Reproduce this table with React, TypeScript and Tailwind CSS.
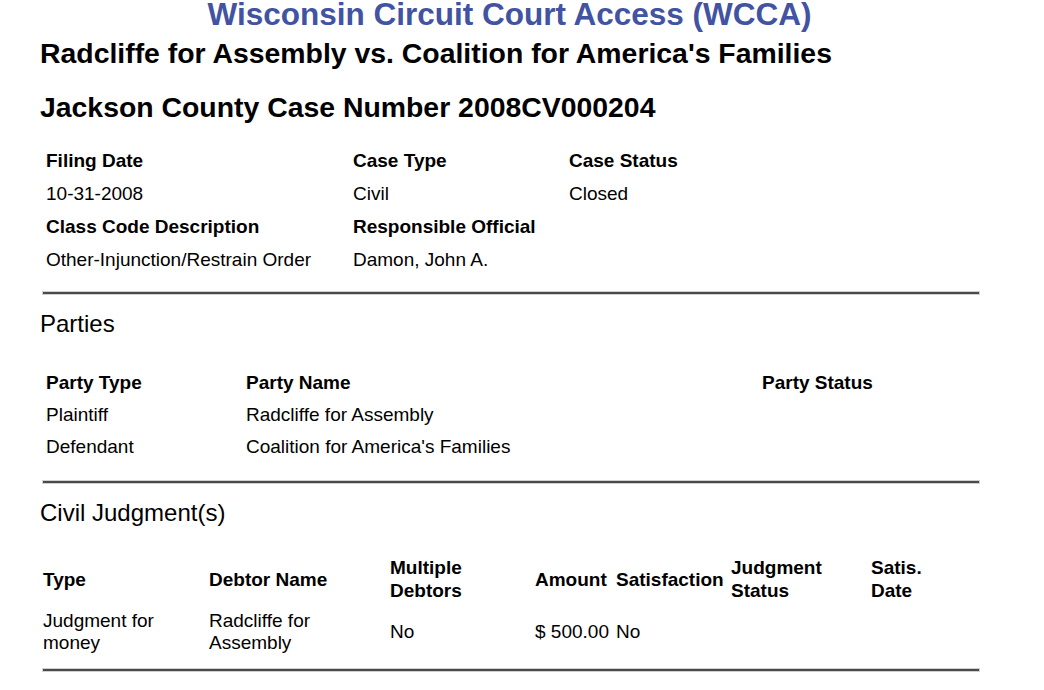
const labels = "font-bold";

function Rule() {
	return <div className="h-[2px] w-[936px] ml-[3px] bg-[#4a4a4a] shadow-[0_0_0_1px_#d0d0d0]" />;
}

const judgmentCols = "grid grid-cols-[166px_181px_145px_81px_115px_140px_1fr] items-center";

export default function App() {
	return (
		<div
			className="h-[690px] overflow-hidden bg-white text-black"
			style={{ fontFamily: '"Liberation Sans", Arial, sans-serif' }}
		>
			<div className="ml-[40px] w-[939px]">
				<h1 className="text-center text-[31.5px] leading-[29px] font-bold text-[#4153a1] whitespace-nowrap">
					Wisconsin Circuit Court Access (WCCA)
				</h1>
				<h2 className="mt-[8px] text-[28.4px] leading-[32px] font-bold whitespace-nowrap">
					Radcliffe for Assembly vs. Coalition for America's Families
				</h2>
				<h2 className="mt-[22px] text-[28.4px] leading-[32px] font-bold whitespace-nowrap">
					Jackson County Case Number 2008CV000204
				</h2>

				<div className="mt-[21px] ml-[6px] grid grid-cols-[307px_216px_1fr] text-[19px] leading-[33px]">
					<div className={labels}>Filing Date</div>
					<div className={labels}>Case Type</div>
					<div className={labels}>Case Status</div>
					<div>10-31-2008</div>
					<div>Civil</div>
					<div>Closed</div>
					<div className={labels}>Class Code Description</div>
					<div className={labels}>Responsible Official</div>
					<div />
					<div>Other-Injunction/Restrain Order</div>
					<div>Damon, John A.</div>
					<div />
				</div>

				<div className="mt-[16px]">
					<Rule />
				</div>

				<h3 className="mt-[15px] text-[24px] leading-[30px]">Parties</h3>

				<div className="mt-[28px] ml-[6px] grid grid-cols-[200px_516px_1fr] text-[19px] leading-[32px]">
					<div className={labels}>Party Type</div>
					<div className={labels}>Party Name</div>
					<div className={labels}>Party Status</div>
					<div>Plaintiff</div>
					<div>Radcliffe for Assembly</div>
					<div />
					<div>Defendant</div>
					<div>Coalition for America's Families</div>
					<div />
				</div>

				<div className="mt-[18px]">
					<Rule />
				</div>

				<h3 className="mt-[15px] text-[24px] leading-[30px]">Civil Judgment(s)</h3>

				<div className={`mt-[28px] ml-[3px] ${judgmentCols} text-[19px] leading-[23px] font-bold`}>
					<div>Type</div>
					<div>Debtor Name</div>
					<div>
						Multiple
						<br />
						Debtors
					</div>
					<div>Amount</div>
					<div>Satisfaction</div>
					<div>
						Judgment
						<br />
						Status
					</div>
					<div>
						Satis.
						<br />
						Date
					</div>
				</div>
				<div className={`mt-[8px] ml-[3px] ${judgmentCols} text-[19px] leading-[22px]`}>
					<div>
						Judgment for
						<br />
						money
					</div>
					<div>
						Radcliffe for
						<br />
						Assembly
					</div>
					<div>No</div>
					<div className="whitespace-nowrap">$ 500.00</div>
					<div>No</div>
					<div />
					<div />
				</div>

				<div className="mt-[15px]">
					<Rule />
				</div>

				<h3 className="mt-[14px] text-[24px] leading-[30px]">Court Record Events</h3>
			</div>
		</div>
	);
}
